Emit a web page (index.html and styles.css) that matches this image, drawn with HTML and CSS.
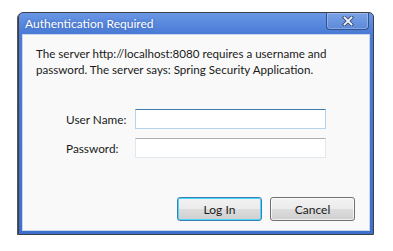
FILE: index.html
```html
<!DOCTYPE html>
<html>
<head>
<meta charset="utf-8">
<link rel="stylesheet" href="styles.css">
</head>
<body>
<div class="dialog">
  <div class="titlebar">
    <span class="title">Authentication Required</span>
    <div class="close">
      <svg width="16" height="10" viewBox="0 0 16 10">
        <path d="M4.5 1.5 L11.5 8.5 M11.5 1.5 L4.5 8.5" stroke="#3a4c72" stroke-width="3.6" stroke-linecap="square"/>
        <path d="M4.5 1.5 L11.5 8.5 M11.5 1.5 L4.5 8.5" stroke="#f4f6fb" stroke-width="1.8" stroke-linecap="square"/>
      </svg>
    </div>
  </div>
  <div class="content">
    <p class="message">The server http://localhost:8080 requires a username and password. The server says: Spring Security Application.</p>
    <div class="form">
      <label class="label">User Name:</label>
      <div class="input focused"></div>
      <label class="label">Password:</label>
      <div class="input"></div>
    </div>
    <div class="buttons">
      <button class="btn default">Log In</button>
      <button class="btn">Cancel</button>
    </div>
  </div>
</div>
</body>
</html>
```
FILE: styles.css
```css
html, body {
  margin: 0;
  padding: 0;
  background: #ffffff;
}
body {
  padding: 12px 0 0 18px;
  font-family: "Lato", "Open Sans", sans-serif;
}
.dialog {
  width: 356px;
  height: 223px;
  box-sizing: border-box;
  border: 1px solid #3a3f4a;
  border-radius: 5px 5px 0 0;
  background: linear-gradient(#6a98e6, #4a7bd6 20px, #3f6fcc);
  padding: 0 3px 3px 3px;
  display: flex;
  flex-direction: column;
  box-shadow: -1px 1px 0 #555;
}
.titlebar {
  height: 21px;
  display: flex;
  align-items: flex-start;
  justify-content: space-between;
}
.title {
  color: #ffffff;
  font-size: 12px;
  line-height: 21px;
  padding-left: 3px;
  text-shadow: 0 0 3px rgba(40,70,140,0.6);
}
.close {
  width: 43px;
  height: 17px;
  box-sizing: border-box;
  border: 1px solid #34528f;
  border-top: none;
  border-radius: 0 0 4px 4px;
  background: linear-gradient(#7aa2e6, #5c89d8);
  display: flex;
  align-items: center;
  justify-content: center;
  margin-right: 1px;
  box-shadow: inset 0 0 0 1px rgba(255,255,255,0.25);
}
.content {
  flex: 1;
  background: #f9f9f9;
  border: 1px solid #c9d6ec;
  box-sizing: border-box;
  display: flex;
  flex-direction: column;
  padding: 0 14px 9px 13px;
}
.message {
  margin: 11px 0 0 0;
  font-size: 11.6px;
  line-height: 16px;
  color: #1a1a1a;
}
.form {
  margin: 31px 0 0 30px;
  display: grid;
  grid-template-columns: 69px 191px;
  row-gap: 9px;
  align-items: center;
}
.label {
  font-size: 11.8px;
  color: #1a1a1a;
}
.input {
  height: 20px;
  box-sizing: border-box;
  background: #ffffff;
  border: 1px solid #e2e8ef;
  border-top-color: #abadb3;
}
.input.focused {
  border-color: #b7d3ea;
  border-top-color: #3d7bad;
}
.buttons {
  margin-top: auto;
  display: flex;
  justify-content: flex-end;
  gap: 8px;
}
.btn {
  width: 85px;
  height: 24px;
  box-sizing: border-box;
  border: 1px solid #707070;
  border-radius: 3px;
  background: linear-gradient(#f2f2f2, #ebebeb 50%, #dddddd 50%, #cfcfcf);
  font-family: "Lato", "Open Sans", sans-serif;
  font-size: 12px;
  color: #1a1a1a;
  padding: 0;
  box-shadow: inset 0 0 0 1px rgba(255,255,255,0.7);
}
.btn.default {
  border-color: #3c7fb1;
  box-shadow: inset 0 0 0 1px #48d8fb;
}
```
